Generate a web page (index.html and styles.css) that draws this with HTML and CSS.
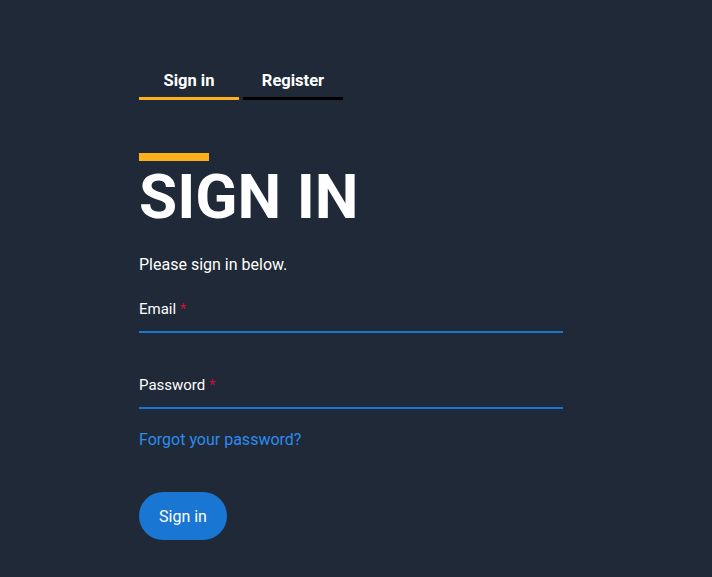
FILE: index.html
```html
<!DOCTYPE html>
<html lang="en">
<head>
  <meta charset="UTF-8">
  <meta name="viewport" content="width=device-width, initial-scale=1.0">
  <title>Sign in</title>
  <link rel="stylesheet" href="styles.css">
</head>
<body>
  <div class="page">
    <div class="tabs">
      <a class="tab active" href="#">Sign in</a>
      <a class="tab" href="#">Register</a>
    </div>

    <div class="accent"></div>
    <h1>SIGN IN</h1>
    <p class="intro">Please sign in below.</p>

    <div class="field">
      <label for="email">Email <span class="req">*</span></label>
      <input type="email" id="email">
    </div>
    <div class="field">
      <label for="password">Password <span class="req">*</span></label>
      <input type="password" id="password">
    </div>

    <a class="forgot" href="#">Forgot your password?</a>

    <button class="btn">Sign in</button>
  </div>
</body>
</html>
```

FILE: styles.css
```css
body { margin: 0; background: #1f2937; font-family: Roboto, 'Liberation Sans', sans-serif; color: #fff; }
.page { padding: 63px 0 0 139px; }
.tabs { display: flex; gap: 4px; }
.tab { width: 100px; padding: 8px 0 6px; line-height: 20px; text-align: center; font-size: 16.5px; font-weight: bold; color: #fff; text-decoration: none; border-bottom: 3px solid #000; }
.tab.active { border-bottom-color: #fdb01a; }
.accent { width: 70px; height: 8px; background: #fdb01a; margin-top: 53px; }
h1 { margin: 5px 0 0; font-size: 62px; line-height: 62px; font-weight: bold; }
.intro { margin: 25px 0 0; font-size: 16px; line-height: 24px; }
.field { width: 424px; margin-top: 22px; }
.field + .field { margin-top: 42px; }
.field label { display: block; font-size: 15px; line-height: 20px; }
.req { color: #c8102e; }
.field input { display: block; width: 100%; box-sizing: border-box; height: 14px; padding: 0; background: transparent; border: none; border-bottom: 2px solid #1976d2; color: #fff; outline: none; }
.forgot { display: block; margin-top: 21px; font-size: 16px; line-height: 20px; color: #2d8cf0; text-decoration: none; }
.btn { display: block; margin-top: 42px; height: 48px; padding: 0 20px; border: none; border-radius: 24px; background: #1976d2; color: #fff; font-family: inherit; font-size: 16px; cursor: pointer; }
```
